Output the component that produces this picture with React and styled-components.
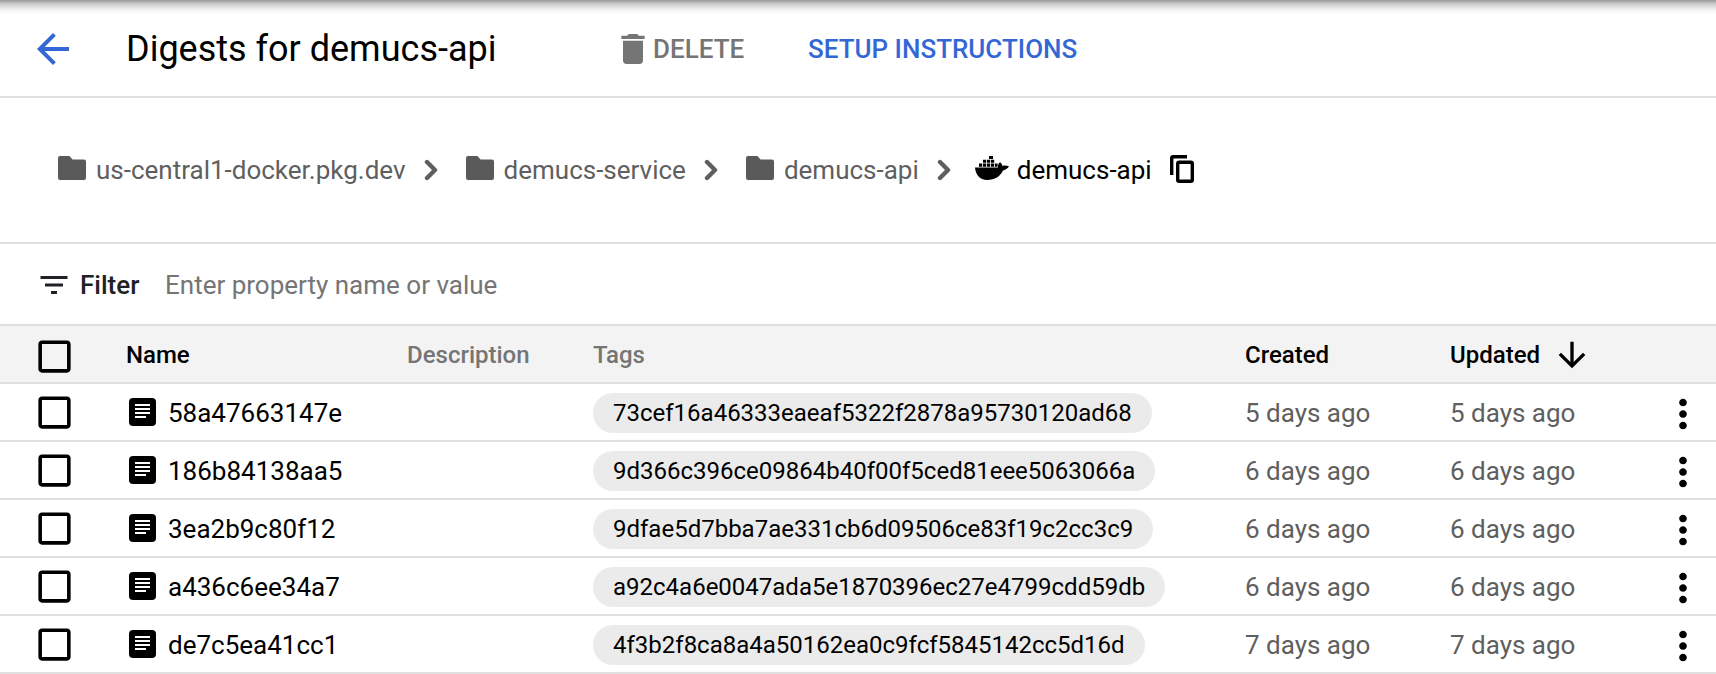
import React from 'react';
import styled, { createGlobalStyle } from 'styled-components';
import {
    MdArrowBack,
    MdArrowDownward,
    MdCheckBoxOutlineBlank,
    MdDelete,
    MdFilterList,
    MdMoreVert,
} from 'react-icons/md';

const GlobalStyle = createGlobalStyle`
    html, body {
        margin: 0;
        padding: 0;
        background: #fff;
        font-family: Roboto, "Liberation Sans", sans-serif;
        overflow: hidden;
    }
`;

const Page = styled.div`
    width: 1716px;
    height: 674px;
    overflow: hidden;
`;

const TopShadow = styled.div`
    height: 14px;
    background: linear-gradient(#9a9a9a 0, #cfcfcf 30%, #f2f2f2 70%, #fff 100%);
`;

const Header = styled.header`
    display: flex;
    align-items: center;
    height: 70px;
    padding: 0 0 12px 29px;
    border-bottom: 2px solid #e0e0e0;
`;

const BackButton = styled.span`
    display: flex;
    width: 97px;
    color: #3367d6;
`;

const Title = styled.h1`
    margin: 0;
    width: 487px;
    font-size: 36px;
    font-weight: 400;
    color: #000;
`;

const ActionButton = styled.span`
    display: flex;
    align-items: center;
    font-size: 26px;
    font-weight: 500;
    color: ${(p) => p.$color};
`;

const DeleteButton = styled(ActionButton)`
    width: 195px;
`;

const Breadcrumbs = styled.nav`
    display: flex;
    align-items: center;
    height: 144px;
    padding-left: 58px;
    border-bottom: 2px solid #e0e0e0;
    font-size: 26px;
`;

const Crumb = styled.span`
    display: flex;
    align-items: center;
    gap: ${(p) => (p.$current ? 8 : 10)}px;
    margin-left: ${(p) => (p.$current ? -4 : 0)}px;
    color: ${(p) => (p.$current ? '#000' : '#5f5f5f')};

    svg {
        margin-bottom: 4px;
    }
`;

const Chevron = styled.svg`
    margin: 0 28px 0 18px;
`;

const CopyIcon = styled.svg`
    margin: 0 0 2px 18px;
`;

const FilterBar = styled.div`
    display: flex;
    align-items: center;
    height: 78px;
    padding: 2px 0 0 36px;
    font-size: 26px;
`;

const FilterLabel = styled.span`
    display: flex;
    align-items: center;
    gap: 8px;
    width: 129px;
    font-weight: 500;
    color: #202124;
`;

const FilterHint = styled.span`
    color: #757575;
`;

const TableRow = styled.div`
    display: grid;
    grid-template-columns: 93px 281px 186px 652px 205px 1fr 66px;
    align-items: center;
    height: 56px;
    padding-left: 33px;
    border-bottom: 2px solid #e0e0e0;
    font-size: 26px;
    color: #5f5f5f;
`;

const HeadRow = styled(TableRow)`
    background: #f3f3f3;
    border-top: 2px solid #e0e0e0;
    font-size: 24px;
    font-weight: 500;
`;

const HeadCell = styled.span`
    display: flex;
    align-items: center;
    gap: 12px;
    padding-top: 2px;
    color: ${(p) => (p.$muted ? '#757575' : '#000')};
`;

const Check = styled.span`
    display: flex;
    color: #000;
`;

const HeadCheck = styled(Check)`
    padding-top: 4px;
`;

const NameCell = styled.span`
    display: flex;
    align-items: center;
    gap: 12px;
    padding-left: 3px;
    color: #000;
`;

const NameText = styled.span`
    padding-top: 2px;
`;

const Age = styled.span`
    padding-top: 2px;
`;

const Chip = styled.span`
    display: inline-block;
    height: 40px;
    line-height: 40px;
    padding: 0 20px;
    border-radius: 20px;
    background: #ebebeb;
    color: #000;
    font-size: 24px;
`;

const ChipCell = styled.span`
    display: flex;
    padding-top: 2px;
`;

const Kebab = styled.span`
    display: flex;
    justify-content: center;
    padding-top: 4px;
    color: #000;
`;

const FolderIcon = () => (
    <svg width="28" height="24" viewBox="0 0 28 24" fill="#5a5a5a">
        <path d="M2 0h9.5l3 3.5H26a2 2 0 0 1 2 2V22a2 2 0 0 1-2 2H2a2 2 0 0 1-2-2V2a2 2 0 0 1 2-2z" />
    </svg>
);

const ChevronIcon = () => (
    <Chevron width="14" height="22" viewBox="0 0 14 22" fill="none">
        <path d="M3 3l8 8-8 8" stroke="#5f5f5f" strokeWidth="4.4" strokeLinecap="round" strokeLinejoin="round" />
    </Chevron>
);

const WhaleIcon = () => (
    <svg width="34" height="24" viewBox="0 0 34 24" fill="#000">
        <path d="M0 11.500H23C22.800 9.500 23.400 7.500 25 6.300C26.500 7.300 27.200 8.500 27.500 10C29.300 9.400 31.500 9.500 34 10.300C32.400 12.800 30.300 14 28 14.500C25 20.500 20 24 12 24C5 24 .6 19 0 11.500Z" />
        <path d="M4 7.500h3.200v3.200H4zM8 7.500h3.200v3.200H8zM12 7.500h3.200v3.200H12zM16 7.500h3.200v3.200H16zM20 7.500h2.600v3.200H20z" />
        <path d="M8 3.700h3.200v3H8zM12 3.700h3.200v3H12zM16 3.700h3.200v3H16z" />
        <path d="M14 0h4v3h-4z" />
    </svg>
);

const CopyGlyph = () => (
    <CopyIcon width="24" height="28" viewBox="0 0 24 28" fill="none" stroke="#000" strokeWidth="3.400">
        <path d="M1.700 20V3.200a1.500 1.500 0 0 1 1.500-1.500H17" />
        <rect x="7.700" y="7.200" width="14.600" height="19.100" rx="1.500" />
    </CopyIcon>
);

const DigestIcon = () => (
    <svg width="27" height="28" viewBox="0 0 27 28">
        <rect width="27" height="28" rx="4" fill="#000" />
        <path d="M6 7h15M6 11h15M6 15h15M6 19h11" stroke="#fff" strokeWidth="1.800" />
    </svg>
);

const digests = [
    ['58a47663147e', '73cef16a46333eaeaf5322f2878a95730120ad68', '5 days ago'],
    ['186b84138aa5', '9d366c396ce09864b40f00f5ced81eee5063066a', '6 days ago'],
    ['3ea2b9c80f12', '9dfae5d7bba7ae331cb6d09506ce83f19c2cc3c9', '6 days ago'],
    ['a436c6ee34a7', 'a92c4a6e0047ada5e1870396ec27e4799cdd59db', '6 days ago'],
    ['de7c5ea41cc1', '4f3b2f8ca8a4a50162ea0c9fcf5845142cc5d16d', '7 days ago'],
];

const folders = ['us-central1-docker.pkg.dev', 'demucs-service', 'demucs-api'];

function App() {
    return (
        <Page>
            <GlobalStyle />
            <TopShadow />
            <Header>
                <BackButton>
                    <MdArrowBack size={48} />
                </BackButton>
                <Title>Digests for demucs-api</Title>
                <DeleteButton $color="#757575">
                    <MdDelete size={40} />
                    DELETE
                </DeleteButton>
                <ActionButton $color="#3367d6">SETUP INSTRUCTIONS</ActionButton>
            </Header>
            <Breadcrumbs>
                {folders.map((name) => (
                    <React.Fragment key={name}>
                        <Crumb>
                            <FolderIcon />
                            {name}
                        </Crumb>
                        <ChevronIcon />
                    </React.Fragment>
                ))}
                <Crumb $current>
                    <WhaleIcon />
                    demucs-api
                </Crumb>
                <CopyGlyph />
            </Breadcrumbs>
            <FilterBar>
                <FilterLabel>
                    <MdFilterList size={36} />
                    Filter
                </FilterLabel>
                <FilterHint>Enter property name or value</FilterHint>
            </FilterBar>
            <HeadRow>
                <HeadCheck>
                    <MdCheckBoxOutlineBlank size={43} />
                </HeadCheck>
                <HeadCell>Name</HeadCell>
                <HeadCell $muted>Description</HeadCell>
                <HeadCell $muted>Tags</HeadCell>
                <HeadCell>Created</HeadCell>
                <HeadCell>
                    Updated
                    <MdArrowDownward size={40} />
                </HeadCell>
            </HeadRow>
            {digests.map(([name, tag, age]) => (
                <TableRow key={name}>
                    <Check>
                        <MdCheckBoxOutlineBlank size={43} />
                    </Check>
                    <NameCell>
                        <DigestIcon />
                        <NameText>{name}</NameText>
                    </NameCell>
                    <span />
                    <ChipCell>
                        <Chip>{tag}</Chip>
                    </ChipCell>
                    <Age>{age}</Age>
                    <Age>{age}</Age>
                    <Kebab>
                        <MdMoreVert size={46} />
                    </Kebab>
                </TableRow>
            ))}
        </Page>
    );
}

export default App;
